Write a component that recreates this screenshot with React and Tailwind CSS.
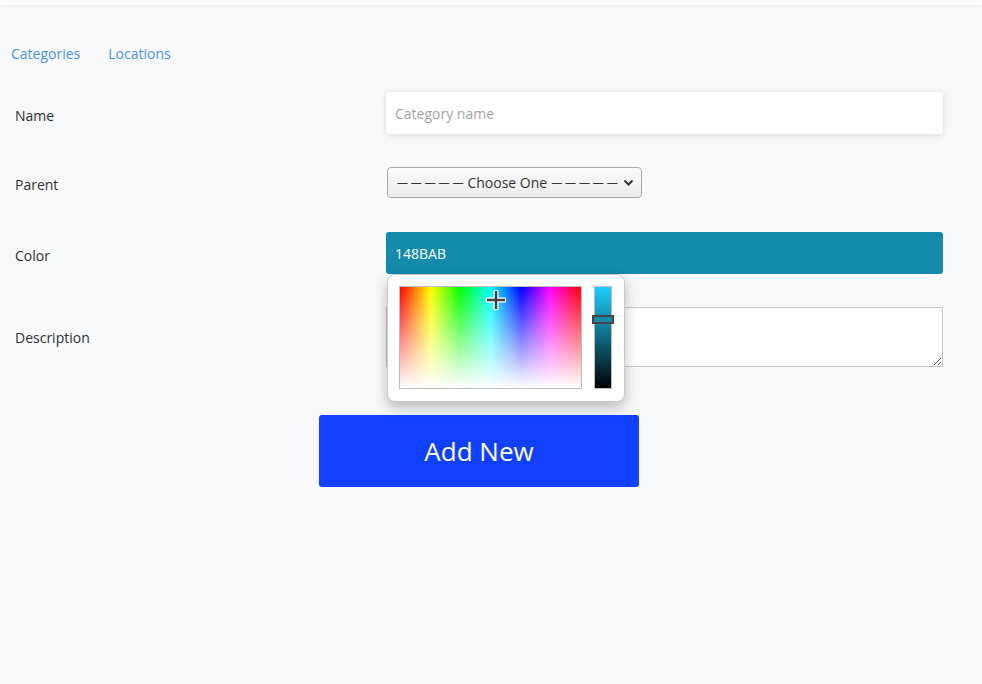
import React from 'react';

// Category form with an open color picker under the Color field
const ColorPopover = () => (
  <div className="absolute left-px top-[42px] z-10 flex h-[128px] w-[238px] gap-[12px] rounded-[8px] border border-[#c9c9c9] bg-white p-[11px] shadow-[0_6px_14px_rgba(0,0,0,0.25)]">
    {/* saturation / hue area */}
    <div className="relative h-[103px] w-[183px] border border-[#bdbdbd] bg-[linear-gradient(to_right,#ff0000,#ffff00_17%,#00ff00_33%,#00ffff_50%,#0000ff_67%,#ff00ff_83%,#ff0000)]">
      <div className="absolute inset-0 bg-[linear-gradient(to_bottom,rgba(255,255,255,0),#ffffff)]" />
      <svg className="absolute left-[85px] top-[2px]" width="22" height="22" viewBox="0 0 22 22">
        <path d="M11 1v20M1 11h20" stroke="#fff" strokeWidth="5" />
        <path d="M11 2v18M2 11h18" stroke="#444" strokeWidth="2.5" />
      </svg>
    </div>
    {/* value slider */}
    <div className="relative h-[103px] w-[18px] border border-[#bdbdbd] bg-[linear-gradient(to_bottom,#1dd0ff,#000000)]">
      <div className="absolute left-[-3px] top-[28px] h-[9px] w-[22px] border-2 border-[#444] bg-[#148bab]" />
    </div>
  </div>
);

const Row = ({ label, children, className = '', labelPad = 'pt-[4px]' }) => (
  <div className={`flex items-center ${className}`}>
    <div className={`w-[386px] pl-[15px] text-[14px] text-[#2f2f2f] ${labelPad}`}>{label}</div>
    <div className="relative w-[557px]">{children}</div>
  </div>
);

const Dashes = () => <span className="text-[11px]">— — — — —</span>;

export default function App() {
  return (
    <div className="min-h-[684px] bg-[#f8f9fb] font-['Open_Sans','Noto_Sans',sans-serif]">
      {/* top bar */}
      <div className="h-[5px] bg-white shadow-[0_1px_4px_rgba(0,0,0,0.06)]" />

      {/* tabs */}
      <div className="mt-[38px] flex gap-[28px] pl-[11px] text-[14px] text-[#4a93dc]">
        <span>Categories</span>
        <span>Locations</span>
      </div>

      <div className="mt-[28px]">
        <Row label="Name">
          <input
            className="h-[42px] w-full rounded-[3px] bg-white px-[9px] text-[14px] shadow-[0_1px_6px_rgba(0,0,0,0.14)] outline-none placeholder:text-[#a3a3a3]"
            placeholder="Category name"
          />
        </Row>

        <Row label="Parent" className="mt-[33px]">
          <div className="ml-px flex h-[31px] w-[255px] items-center justify-between rounded-[4px] border border-[#a9a9a9] bg-[linear-gradient(to_bottom,#fbfbfb,#ececec)] pl-[9px] pr-[7px] text-[14px] text-[#333]">
            <span className="flex items-center gap-[4px] whitespace-nowrap">
              <Dashes />
              <span>Choose One</span>
              <Dashes />
            </span>
            <svg width="11" height="8" viewBox="0 0 11 8" className="shrink-0">
              <path d="M1.5 1.5l4 4 4-4" fill="none" stroke="#333" strokeWidth="2" />
            </svg>
          </div>
        </Row>

        <Row label="Color" className="mt-[34px]">
          <div className="flex h-[42px] items-center rounded-[3px] bg-[#148bab] px-[9px] text-[14px] text-white">
            148BAB
          </div>
          <ColorPopover />
        </Row>

        <Row label="Description" className="mt-[33px]" labelPad="pt-0">
          <textarea className="block h-[60px] w-full border border-[#c8c8c8] bg-white outline-none" />
        </Row>
      </div>

      <button className="ml-[319px] mt-[48px] h-[72px] w-[320px] rounded-[3px] bg-[#1140ff] text-[26px] text-white">
        Add New
      </button>
    </div>
  );
}
